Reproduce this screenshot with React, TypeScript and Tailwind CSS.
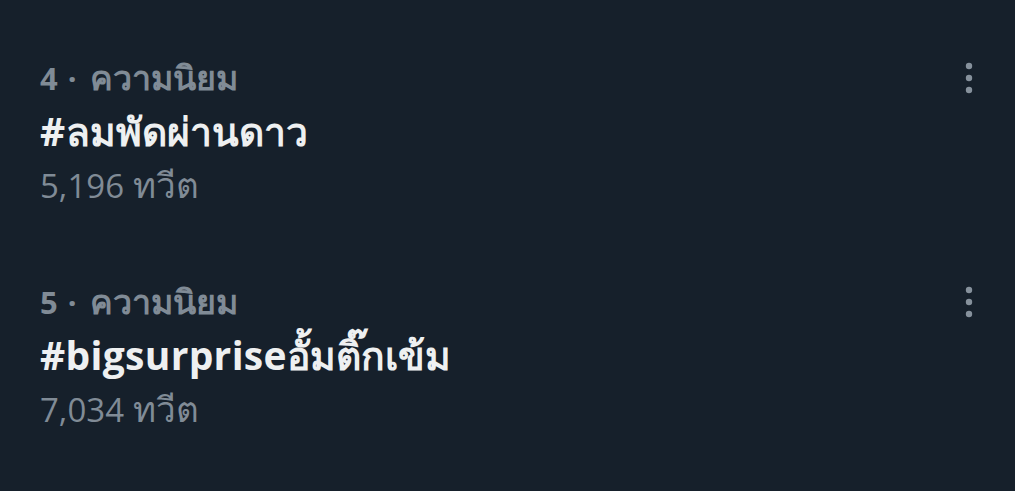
import React from "react";

const trends = [
  { rank: 4, tag: "", thai: "ลมพัดผ่านดาว", count: "5,196" },
  { rank: 5, tag: "bigsurprise", thai: "อั้มติ๊กเข้ม", count: "7,034" },
];

function Dots() {
  return (
    <svg width="12" height="34" viewBox="0 0 12 34" className="text-[#86919c]">
      <circle cx="6" cy="4" r="3.2" fill="currentColor" />
      <circle cx="6" cy="16" r="3.2" fill="currentColor" />
      <circle cx="6" cy="28" r="3.2" fill="currentColor" />
    </svg>
  );
}

export default function App() {
  return (
    <div
      className="w-[1015px] h-[491px] bg-[#16202b] overflow-hidden flex flex-col gap-[62px] pt-[50px] pl-[40px] pr-[40px]"
      style={{ fontFamily: '"Open Sans", "Noto Sans", sans-serif' }}
    >
      {trends.map((t) => (
        <div key={t.rank} className="flex justify-between items-start">
          <div className="flex flex-col">
            <div className="h-[54px] leading-[54px] text-[31px] font-bold text-[#808b96] whitespace-nowrap">
              <span>{t.rank}</span>
              <span className="ml-[10px] mr-[13px]">·</span>
              <span className="text-[34px]">ความนิยม</span>
            </div>
            <div className="h-[54px] leading-[54px] text-[39px] tracking-[0.3px] font-bold text-[#eef0f1] whitespace-nowrap">
              #{t.tag}
              <span className="text-[39px] tracking-normal">{t.thai}</span>
            </div>
            <div className="h-[54px] leading-[54px] text-[33px] text-[#808b96] whitespace-nowrap">
              {t.count} <span className="text-[35px]">ทวีต</span>
            </div>
          </div>
          <div className="pt-[12px]">
            <Dots />
          </div>
        </div>
      ))}
    </div>
  );
}
